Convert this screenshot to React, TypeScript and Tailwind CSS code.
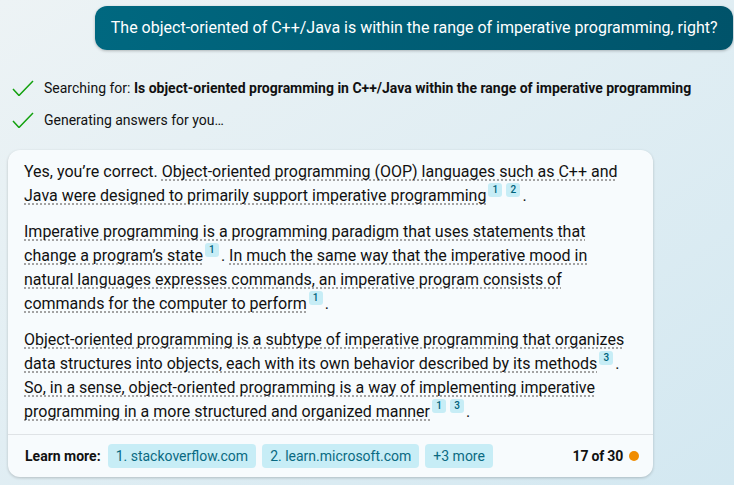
import React from "react";

const Chk = () => (
  <svg width="22" height="16" viewBox="0 0 22 16" fill="none" className="shrink-0">
    <path d="M1 9 L7 15.5 L21 1" stroke="#13a10e" strokeWidth="1.5" />
  </svg>
);

const Sup = ({ n }: { n: number }) => (
  <a className="inline-flex items-center justify-center w-[14px] h-[14px] -mt-2 rounded-[3px] bg-[#c7edf6] text-[#00637b] text-[10px] leading-[14px] font-medium align-[8px] ml-[2px] mr-[2px]">
    {n}
  </a>
);

const U = ({ children }: { children: React.ReactNode }) => (
  <span className="underline decoration-dotted decoration-2 decoration-[#a3a3a3] underline-offset-[2px] [text-decoration-skip-ink:none]">{children}</span>
);

const Chip = ({ children }: { children: React.ReactNode }) => (
  <a className="h-6 px-2 rounded-[4px] bg-[#c7edf6] text-[#0a6a82] text-sm leading-6 whitespace-nowrap">{children}</a>
);

export default function App() {
  return (
    <div className="w-[734px] h-[485px] overflow-hidden bg-gradient-to-br from-[#edf3f5] to-[#d3e8f1] font-['Roboto',sans-serif] text-[#111] flex flex-col">
      <div className="flex justify-end pt-[6px] pr-px">
        <div className="h-11 pl-[15.5px] pr-[15.5px] flex items-center rounded-xl bg-gradient-to-r from-[#006880] to-[#00536a] text-white text-base shadow-[0_1px_3px_rgba(0,0,0,0.25)] whitespace-nowrap">
          The object-oriented of C++/Java is within the range of imperative programming, right?
        </div>
      </div>

      <div className="mt-[28px] pl-3 flex flex-col gap-3 text-sm leading-5">
        <div className="flex items-center gap-[10px]">
          <Chk />
          <span>
            Searching for: <b className="font-bold">Is object-oriented programming in C++/Java within the range of imperative programming</b>
          </span>
        </div>
        <div className="flex items-center gap-[10px]">
          <Chk />
          <span>Generating answers for you…</span>
        </div>
      </div>

      <div className="mt-[20px] ml-2 w-[645px] h-[327px] rounded-xl bg-[#f7fbfd] shadow-[0_1px_3px_rgba(0,0,0,0.2)] flex flex-col">
        <div className="flex-1 px-4 pt-[10px] text-base leading-6 text-[#111]">
          <p>
            Yes, you’re correct. <U>Object-oriented programming (OOP) languages such as C++ and Java were designed to primarily support imperative programming</U>
            <Sup n={1} />
            <Sup n={2} />.
          </p>
          <p className="mt-3">
            <U>Imperative programming is a programming paradigm that uses statements that change a program’s state</U>
            <Sup n={1} />. <U>In much the same way that the imperative mood in natural languages expresses commands, an imperative program consists of commands for the computer to perform</U>
            <Sup n={1} />.
          </p>
          <p className="mt-3">
            <U>Object-oriented programming is a subtype of imperative programming that organizes data structures into objects, each with its own behavior described by its methods</U>
            <Sup n={3} />. <U>So, in a sense, object-oriented programming is a way of implementing imperative programming in a more structured and organized manner</U>
            <Sup n={1} />
            <Sup n={3} />.
          </p>
        </div>
        <div className="h-[43px] border-t border-[#dfe3e6] flex items-center pl-[17px] pr-[14px] gap-[6px] text-sm">
          <b className="font-bold mr-px">Learn more:</b>
          <Chip>1. stackoverflow.com</Chip>
          <Chip>2. learn.microsoft.com</Chip>
          <Chip>+3 more</Chip>
          <span className="ml-auto font-bold tracking-[-0.2px]">17 of 30</span>
          <span className="w-[10px] h-[10px] rounded-full bg-[#f08c00]" />
        </div>
      </div>
    </div>
  );
}
